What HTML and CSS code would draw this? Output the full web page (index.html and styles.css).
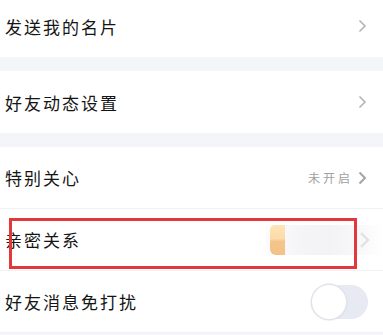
FILE: index.html
```html
<!DOCTYPE html>
<html lang="zh-CN">
<head>
<meta charset="utf-8">
<link rel="stylesheet" href="styles.css">
</head>
<body>
<div class="page">
  <div class="row first">
    <span class="label">发送我的名片</span>
    <svg class="chev" width="9" height="14" viewBox="0 0 9 14"><path d="M1.5 1.5 L7 7 L1.5 12.5" fill="none" stroke="#b4b4b8" stroke-width="1.6"/></svg>
  </div>
  <div class="gap"></div>
  <div class="row">
    <span class="label">好友动态设置</span>
    <svg class="chev" width="9" height="14" viewBox="0 0 9 14"><path d="M1.5 1.5 L7 7 L1.5 12.5" fill="none" stroke="#b4b4b8" stroke-width="1.6"/></svg>
  </div>
  <div class="gap"></div>
  <div class="row line">
    <span class="label">特别关心</span>
    <span class="right"><span class="value">未开启</span>
    <svg class="chev" width="9" height="14" viewBox="0 0 9 14"><path d="M1.5 1.5 L7 7 L1.5 12.5" fill="none" stroke="#a4a4a8" stroke-width="2"/></svg></span>
  </div>
  <div class="row line mark">
    <span class="label">亲密关系</span>
    <span class="blur">
      <span class="peach"></span>
      <span class="fog"></span>
      <svg class="ghost" width="12" height="18" viewBox="0 0 12 18"><path d="M2 2 L9 9 L2 16" fill="none" stroke="#e4e4e8" stroke-width="2.5"/></svg>
    </span>
    <div class="redbox"></div>
  </div>
  <div class="row line">
    <span class="label">好友消息免打扰</span>
    <span class="toggle"><span class="knob"></span></span>
  </div>
  <div class="tail"></div>
</div>
</body>
</html>
```
FILE: styles.css
```css
* { box-sizing: border-box; }
html, body { margin: 0; padding: 0; }
body {
  width: 383px;
  height: 335px;
  overflow: hidden;
  background: #f4f5f9;
  font-family: "Noto Sans CJK SC", "Noto Sans", sans-serif;
}
.page { display: flex; flex-direction: column; }
.row {
  position: relative;
  height: 62px;
  background: #fff;
  display: flex;
  align-items: center;
  justify-content: space-between;
  padding: 0 16px 0 5px;
}
.row.first { height: 57px; padding-bottom: 5px; }
.row.line { border-bottom: 1px solid #f0f1f4; height: 62px; }
.gap { height: 14px; }
.gap + .gap { height: 13px; }
.label {
  font-size: 17px;
  letter-spacing: 2px;
  color: #151515;
  line-height: 1;
}
.chev { display: block; }
.right { display: flex; align-items: center; gap: 5px; }
.value {
  font-size: 12px;
  letter-spacing: 3px;
  color: #a0a0a0;
  line-height: 1;
}
.blur {
  position: relative;
  display: flex;
  align-items: center;
  width: 118px;
  height: 30px;
  margin-right: -16px;
  padding-left: 5px;
  border-radius: 6px 0 0 6px;
  overflow: hidden;
  background: linear-gradient(90deg, #fcfcfd 0%, #f5f5f7 30%, #f3f3f5 55%, #f8f8f9 80%, #ffffff 100%);
}
.peach {
  align-self: stretch;
  width: 15px;
  background: linear-gradient(180deg, #fde3b6 0%, #fbdcaa 45%, #f5c48a 55%, #f4c287 100%);
  border-radius: 5px 0 0 6px;
}
.fog { flex: 1; }
.ghost { display: block; margin-right: 12px; }
.redbox {
  position: absolute;
  left: 9px;
  top: 9px;
  width: 348px;
  height: 51px;
  border: 3px solid #e2373b;
}
.toggle {
  display: flex;
  align-items: center;
  width: 56px;
  height: 34px;
  border-radius: 17px;
  background: #e7e9f3;
  margin-right: -1px;
}
.knob {
  width: 34px;
  height: 34px;
  border-radius: 50%;
  background: #fff;
  box-shadow: 0 0 0 1.5px #e1e3ea, 0 1px 3px rgba(0,0,0,0.08);
}
.tail { height: 2px; }
```
